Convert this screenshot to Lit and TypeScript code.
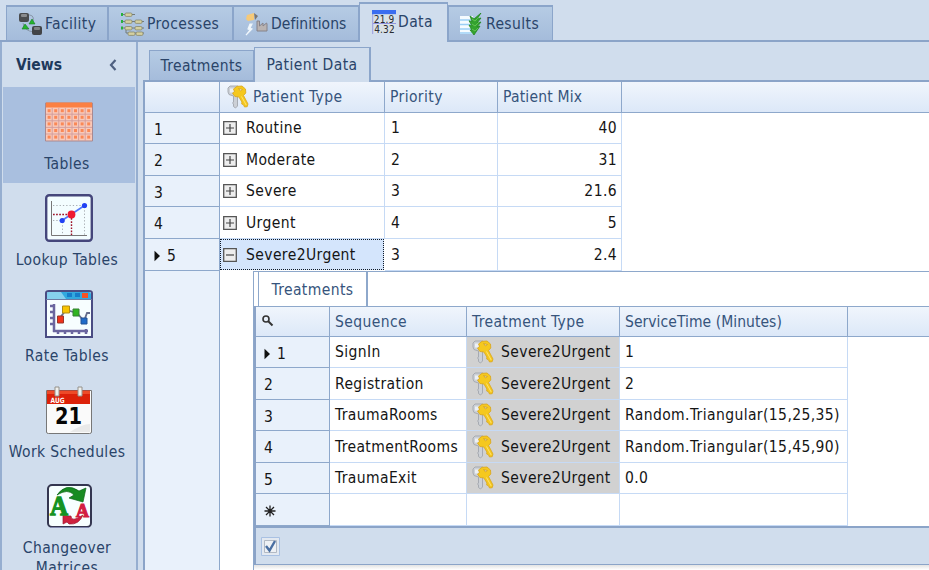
import { LitElement, html, svg, css, nothing } from "lit";
import { customElement, property } from "lit/decorators.js";
import { classMap } from "lit/directives/class-map.js";

const facilityIcon = html`<svg width="26" height="24" viewBox="0 0 26 24">
  <path d="M8 3Q17 2 15 9M5 11Q6 19 16 20" fill="none" stroke="#8796a8"/>
  <rect x="1" y="1" width="10" height="9" rx="2" fill="#4a4c4f"/><rect x="3" y="2" width="6" height="3" rx="1" fill="#898b8e"/>
  <rect x="14" y="14" width="10" height="9" rx="2" fill="#424447"/><rect x="16" y="15" width="6" height="3" rx="1" fill="#7d8083"/>
  <path d="M14 7l3 5h-6zM7 12l4 5H4z" fill="#25b52d" stroke="#177c27" stroke-width=".6"/></svg>`;

const node = (x: number, y: number) => svg`<rect x=${x} y=${y} width="7" height="3.4" rx="1.2" fill="#d4d0a0" stroke="#87876b" stroke-width=".8"/>`;
const processIcon = html`<svg width="25" height="25" viewBox="0 0 25 25">
  <path d="M0 2.500h14M0 9.500h23M0 16h23M5 17v4h18" stroke="#727b79" fill="none"/>
  ${node(4, 1)}${node(4, 8)}${node(14, 8)}${node(4, 14.5)}${node(14, 14.5)}${node(7, 20)}${node(15, 20)}
  <path d="M0 1h2v3H0zM0 8h2v3H0zM0 14.500h2v3H0z" fill="#27b23c"/></svg>`;

const definitionIcon = html`<svg width="24" height="24" viewBox="0 0 24 24">
  <path d="M2 3l7-2v7l-6 1-2-2z" fill="#f6c978"/><path d="M9 1l4 3-3 4z" fill="#7d7771"/>
  <path d="M5 12l-2 5 2 1-4 5 6-6-2-1 2-4z" fill="#f5faff" stroke="#eef5fb" stroke-width="1.200"/>
  <path d="M12 19V9h2.500v5l3.500-3v3l3.500-3 .5 1v7z" fill="#b9b3b2" stroke="#85828a"/></svg>`;

const dataIcon = html`<svg width="24" height="25" viewBox="0 0 24 25">
  <path d="M.7 4v20" stroke="#9c9de0"/><path d="M2 4h21v19H2z" fill="#dae1e6"/><path d="M0 0h24v4.200H0z" fill="#3b6df0"/>
  <path d="M1 13.500h23" stroke="#8f92dd"/>
  <g font-family="DejaVu Sans Condensed" font-size="10" letter-spacing="0" fill="#262b32"><text x="1.800" y="12.500" textLength="20.500">21.9</text><text x="2.200" y="23" textLength="20.500">4.32</text></g></svg>`;

const resultsIcon = html`<svg width="24" height="23" viewBox="0 0 24 23">
  <path d="M1 3h13v18H1z" fill="#f5fbff"/><path d="M1 7h12M1 11.500h12M1 16h12M1 20h12" stroke="#9acff6" stroke-width="1.600"/>
  <path d="M11 3l4 3 7-6-4 6 4-1-4 5 4-1-4 5 3-1-6 9-4-5 2 .5-3-5.500 3 .8-3-5 3 .8z" fill="#33a22f" stroke="#22861f" stroke-width=".8"/>
  <path d="M13 6l3 2 4-4M13 11l3 2 4-4M13 16l3 2 3-3" fill="none" stroke="#70cc5b" stroke-width=".8"/></svg>`;

const keys = html`<svg class="keys" width="22" height="24" viewBox="0 0 22 24">
  <path d="M1 3l2-2 8 0 1 2v7l-1.500 1v10L8.500 23 6.500 21.500V19l-1-1 1-1v-6L2 9.500 1 7z" fill="#ccd0d6" stroke="#a2a6ad" stroke-width=".9"/>
  <path d="M3 3.500h4v4H3z" fill="#edf0f4"/>
  <path fill-rule="evenodd" d="M6.500 4L10 1.300l5-.3 3.500 3 .3 4-2.300 2.500L21 19l-.8 2.700-2.700.3-1-2.200-1.800-.8.200-2-3-5-4-.5L5.500 8l2-1.500zM11.500 3.500l2 2.500 2-1.500z" fill="#f5c81e" stroke="#d9a51c" stroke-width=".8"/>
  <path d="M14.500 11.500l4.700 8.500" stroke="#ffe36f"/></svg>`;

const tableIcon = html`<svg width="48" height="48" viewBox="0 0 48 48">
  <path d="M.5 5h47v38H.5z" fill="#fac9b8" stroke="#a98991"/><path d="M1 4.500h46v5H1z" fill="#fb8043"/>
  ${[0, 1, 2, 3, 4].map(r => [0, 1, 2, 3, 4, 5, 6].map(c => svg`<rect x=${2.6 + c * 6.6} y=${11.2 + r * 6.6} width="3" height="3" fill="#fa8856"/>`))}
  <path d="M7.200 10v33M13.800 10v33M20.400 10v33M27 10v33M33.600 10v33M40.200 10v33M1 16.200h46M1 22.800h46M1 29.400h46M1 36h46" stroke="#d09c9c" stroke-width=".9" fill="none"/></svg>`;

const lookupIcon = html`<svg width="48" height="48" viewBox="0 0 48 48">
  <rect x="1.200" y="1.200" width="45.600" height="45.600" rx="3" fill="#f3fdff" stroke="#45467b" stroke-width="2.400"/>
  <path d="M6.500 7v34.500H42" fill="none" stroke="#777"/>
  <path d="M8 11.500h31M8 26.500h9M17.500 28v13M39.500 13v28" fill="none" stroke="#a7adb2" stroke-dasharray="1.300 2"/>
  <path d="M8 20.500h18M26.500 21v20" stroke="#9e1429" stroke-width="1.400" stroke-dasharray="1.700 1.400" fill="none"/>
  <path d="M17 26.500l22.500-15" stroke="#5277fa" stroke-width="1.600"/><circle cx="17.200" cy="26.500" r="2.600" fill="#2142f4"/><circle cx="39.500" cy="11.500" r="2.600" fill="#2142f4"/><circle cx="26.500" cy="20.500" r="3.900" fill="#ef1931"/></svg>`;

const rateIcon = html`<svg width="48" height="48" viewBox="0 0 48 48">
  <path d="M1 47V3q0-2 3-2h40q3 0 3 2v44z" fill="#f7feff" stroke="#4a4c83" stroke-width="2"/>
  <path d="M2 9V4q0-2 2-2h40q2 0 2 2v5z" fill="#32a9df"/><path d="M2 9V4q0-2 2-2h12l5 7z" fill="#86d0ee"/>
  <path d="M22 3h5v4h-5zM30 3h5v4h-5z" fill="#167cc9"/><path d="M37 3h6v5h-6z" fill="#f65124"/><path d="M1 9.500h46" stroke="#6d7aa3"/>
  <path d="M9 14v28M5 16h4M5 22h4M5 28h4M5 34h4M8 41h35M13 41v3M20 41v3M27 41v3M34 41v3M41 39v5" stroke="#6b669f" stroke-width="2.500" fill="none"/>
  <path d="M14 29l7-9 11 3 7 8 3-8h3" stroke="#656d8c" stroke-width="1.800" fill="none"/>
  <path d="M12.500 26h6v7h-6z" fill="#ef321a" stroke="#9b352b"/><path d="M17.500 16h7v7h-7z" fill="#f8c500" stroke="#b18b15"/><path d="M28 19h6v7h-6z" fill="#30b421" stroke="#348133"/><path d="M36 28h6v6h-6z" fill="#216cc9" stroke="#245394"/></svg>`;

const calendarIcon = html`<svg width="48" height="48" viewBox="0 0 48 48">
  <path d="M1.500 4.500h45V46q0 1.500-2 1.500h-41q-2 0-2-1.500z" fill="#fafafa" stroke="#777"/>
  <path d="M2 4.500h43V18H2z" fill="#dc2109"/><path d="M2 5h43v3H2z" fill="#ee4a28"/><path d="M25 46q12-8 20-8v8z" fill="#e9e9e9"/>
  <path d="M10 1h4v9h-4zM33 1h4v9h-4z" fill="#f0f0ed" stroke="#94918b"/>
  <g font-family="DejaVu Sans" font-weight="bold" letter-spacing="0"><text x="5.500" y="16.500" font-size="7.200" textLength="14" lengthAdjust="spacingAndGlyphs" fill="#fff">AUG</text><text x="10" y="37.500" font-size="22.500" textLength="27" lengthAdjust="spacingAndGlyphs" fill="#050505">21</text></g></svg>`;

const changeIcon = html`<svg width="48" height="48" viewBox="0 0 48 48">
  <rect x="3" y="3" width="43" height="42" rx="4" fill="#f7ffff" stroke="#343650" stroke-width="2"/><path d="M5 45.500h39" stroke="#8188ae"/>
  <path d="M12 13Q21 0 34 9l7-3-3 14-14-4 5-3q-6-7-17 0z" fill="#168b22" stroke="#0b6417" stroke-width=".7"/>
  <path d="M18 42V31l4 3h4q0 7 12-1-4 10-14 9l-2-2z" fill="#ce213e" stroke="#9e172f" stroke-width=".7"/>
  <g font-family="Liberation Serif" font-weight="bold" letter-spacing="0"><text x="5" y="33" font-size="28" textLength="18" lengthAdjust="spacingAndGlyphs" fill="#139322" stroke="#139322" stroke-width="1.400">A</text><text x="31" y="34.500" font-size="19" textLength="13" lengthAdjust="spacingAndGlyphs" fill="#d31d41" stroke="#d31d41" stroke-width="1.200">A</text></g></svg>`;

const arrow = html`<svg class="arrow" width="7" height="12" viewBox="0 0 7 12"><path d="M.5.800L6 6 .5 11.200z" fill="#111"/></svg>`;
const expander = (open: boolean) => html`<svg class="exp" width="14" height="14" viewBox="0 0 14 14">
  <path d="M.7.700h12.600v12.600H.7z" fill="#ededed" stroke="#555" stroke-width="1.300"/><path d=${open ? "M3 7h8" : "M3 7h8M7 3v8"} stroke="#444" stroke-width="1.200"/></svg>`;

@customElement("main-tabs")
class MainTabs extends LitElement {
  static styles = css`
    :host { display: flex; align-items: flex-end; height: 42px; box-sizing: border-box; padding: 0 0 0 6px; border-bottom: 2px solid #8ba4c8; }
    .tab { box-sizing: border-box; height: 35px; display: flex; align-items: center; border: 1px solid #8ba5ca; border-width: 2px 1px 0 1px; background: linear-gradient(#b5cbe4, #a5bcdb); padding-top: 1px; white-space: nowrap; }
    .active { height: 40px; margin-bottom: -2px; background: #d0dded; padding-bottom: 3px; }
    .t0 { width: 102px; padding-left: 11px; gap: 1px; }
    .t1 { width: 125px; padding-left: 12px; gap: 1px; }
    .t2 { width: 126px; padding-left: 11px; gap: 2px; letter-spacing: .05px; }
    .t3 { width: 89px; padding-left: 12px; gap: 2px; }
    .t4 { width: 105px; padding-left: 10px; gap: 3px; }
    svg { flex: none; }
  `;
  render() {
    const tabs = [["Facility", facilityIcon], ["Processes", processIcon], ["Definitions", definitionIcon], ["Data", dataIcon], ["Results", resultsIcon]];
    return tabs.map(([name, icon], i) => html`<div class="tab t${i} ${i === 3 ? "active" : ""}">${icon}<span>${name}</span></div>`);
  }
}

@customElement("views-panel")
class ViewsPanel extends LitElement {
  static styles = css`
    :host { display: block; box-sizing: border-box; width: 138px; height: 528px; overflow: hidden; border: 1px solid #96aed0; border-width: 0 2px 0 2px; flex: none; }
    .head { height: 45px; display: flex; align-items: center; justify-content: space-between; padding: 0 19px 0 14px; font-weight: bold; letter-spacing: 0; color: #1e395b; }
    .item { height: 96px; box-sizing: border-box; padding: 11px 4px 0 0; display: flex; flex-direction: column; align-items: center; gap: 8px; text-align: center; line-height: 20px; margin: 0 1px; }
    .item svg { flex: none; margin-left: 4px; }
    .selected { background: #a9bfdf; }
  `;
  render() {
    const items = [["Tables", tableIcon], ["Lookup Tables", lookupIcon], ["Rate Tables", rateIcon], ["Work Schedules", calendarIcon], ["Changeover Matrices", changeIcon]];
    return html`<div class="head"><span>Views</span><svg width="8" height="12" viewBox="0 0 8 12"><path d="M6.500 1L2 6l4.500 5" fill="none" stroke="#4f6080" stroke-width="2.200"/></svg></div>
      ${items.map(([name, icon], i) => html`<div class="item ${i ? "" : "selected"}">${icon}<span>${name}</span></div>`)}`;
  }
}

@customElement("treatment-grid")
class TreatmentGrid extends LitElement {
  static styles = css`
    :host { display: block; box-sizing: border-box; border-left: 1px solid #8ea8cb; border-top: 1px solid #8ea8cb; height: 299px; background: #fff; }
    .strip { height: 34px; display: flex; padding-left: 4px; }
    .tab { width: 110px; box-sizing: border-box; border: 1px solid #8ea8cb; border-width: 0 2px 0 1px; text-align: center; color: #36547c; line-height: 37px; }
    .body { border-left: 2px solid #8ba3c7; }
    .row { display: grid; grid-template-columns: 74px 137px 153px 228px 1fr; height: 31px; }
    .tall { height: 32px; }
    .row > div { box-sizing: border-box; border-right: 1px solid #c6daf5; border-bottom: 1px solid #c6daf5; padding-left: 5px; display: flex; align-items: center; white-space: nowrap; }
    .row > div:first-child { background: #e9f1fb; border-color: #8ea8cb; padding: 3px 0 0 8px; }
    .row > div:last-child { border: 0; }
    .header > div, .header > div:first-child { border-color: #8ea8cb; border-top: 1px solid #8ea8cb; background: linear-gradient(#f0f5fc, #dce8f8); color: #36547c; }
    .header > div:last-child { border-top: 1px solid #8ea8cb; border-bottom: 1px solid #8ea8cb; }
    .header > div:first-child { padding: 0 0 3px 5px; }
    .header > .time { letter-spacing: .05px; }
    .row > .key { background: #d1d1d1; padding-left: 5px; gap: 7px; }
    .keys { flex: none; }
    .arrow { margin-right: 6px; }
    .footer { box-sizing: border-box; height: 39px; background: #d0dded; border-top: 2px solid #8ba4c8; border-bottom: 1px solid #8ba4c8; display: flex; align-items: center; padding-left: 5px; }
    .shade { height: 6px; background: linear-gradient(#e3e3e3, #fff 80%); }
  `;
  render() {
    const rows = [["SignIn", "1"], ["Registration", "2"], ["TraumaRooms", "Random.Triangular(15,25,35)"], ["TreatmentRooms", "Random.Triangular(15,45,90)"], ["TraumaExit", "0.0"]];
    return html`<div class="strip"><div class="tab">Treatments</div></div><div class="body">
      <div class="row header"><div><svg width="13" height="13" viewBox="0 0 13 13"><circle cx="5" cy="5" r="3" fill="none" stroke="#333" stroke-width="1.600"/><path d="M7 7l4.500 4.500" stroke="#333" stroke-width="2"/></svg></div><div>Sequence</div><div>Treatment Type</div><div class="time">ServiceTime (Minutes)</div><div></div></div>
      ${rows.map(([name, time], i) => html`<div class=${classMap({ row: true, tall: i === 1 || i === 3 })}><div>${i === 0 ? arrow : nothing}${i + 1}</div><div>${name}</div><div class="key">${keys}<span>Severe2Urgent</span></div><div>${time}</div><div></div></div>`)}
      <div class="row tall"><div><svg width="12" height="12" viewBox="0 0 12 12"><path d="M6 .5v11M.5 6h11M2 2l8 8M10 2l-8 8" stroke="#222" stroke-width="1.300"/></svg></div><div></div><div></div><div></div><div></div></div>
      <div class="footer"><svg width="19" height="19" viewBox="0 0 19 19"><path d="M.5.500h18v18H.5z" fill="#e3e9f1" stroke="#a9c1e3"/><path d="M3.500 3.500h12v12h-12z" fill="#eef1f5" stroke="#b2b9c3"/><path d="M5 9l3.500 4.500 5.500-9.500" fill="none" stroke="#4a6fa2" stroke-width="2.400"/></svg></div></div><div class="shade"></div>`;
  }
}

@customElement("patient-grid")
class PatientGrid extends LitElement {
  static styles = css`
    :host { display: block; height: 490px; box-sizing: border-box; overflow: hidden; border-left: 2px solid #8ba4c8; border-top: 2px solid #8ba4c8; background: #fff; }
    .row { display: grid; grid-template-columns: 75px 165px 113px 124px 1fr; height: 31px; }
    .tall { height: 32px; }
    .row > div { box-sizing: border-box; border-right: 1px solid #c6daf5; border-bottom: 1px solid #c6daf5; display: flex; align-items: center; white-space: nowrap; padding-left: 6px; }
    .row > div:first-child { background: #e9f1fb; border-color: #8ea8cb; padding: 3px 0 0 9px; }
    .row > .name { padding-left: 3px; gap: 9px; }
    .row > .mix { justify-content: flex-end; padding-right: 4px; }
    .row > div:last-child { border: 0; }
    .header > div, .header > div:first-child { border-color: #8ea8cb; background: linear-gradient(#f0f5fc, #dce8f8); color: #36547c; padding-left: 5px; }
    .header > div:last-child { border-bottom: 1px solid #8ea8cb; }
    .header > .mixhead { letter-spacing: .2px; }
    .row > .type { padding-left: 7px; gap: 4px; }
    .row > .focus { background: #d4e5fc; border: 1px dotted #101a28; padding-left: 2px; margin: 0 1px 1px 0; }
    .arrow { margin-right: 6px; }
    .detail { display: grid; grid-template-columns: 75px 33px 1fr; }
    .gutter { background: #e9f1fb; border-right: 1px solid #8ea8cb; }
  `;
  render() {
    const rows = [["Routine", "1", "40"], ["Moderate", "2", "31"], ["Severe", "3", "21.6"], ["Urgent", "4", "5"], ["Severe2Urgent", "3", "2.4"]];
    return html`<div class="row header"><div></div><div class="type">${keys}<span>Patient Type</span></div><div>Priority</div><div class="mixhead">Patient Mix</div><div></div></div>
      ${rows.map(([name, priority, mix], i) => html`<div class=${classMap({ row: true, tall: i === 1 || i === 3 || i === 4 })}><div>${i === 4 ? arrow : nothing}${i + 1}</div><div class="name ${i === 4 ? "focus" : ""}">${expander(i === 4)}<span>${name}</span></div><div>${priority}</div><div class="mix">${mix}</div><div></div></div>`)}
      <div class="detail"><div class="gutter"></div><div></div><treatment-grid></treatment-grid></div>`;
  }
}

@customElement("app-root")
class AppRoot extends LitElement {
  @property() selected = "Patient Data";
  static styles = css`
    :host { display: block; width: 929px; height: 570px; overflow: hidden; background: #d0dded; font: 15.500px "DejaVu Sans Condensed", "DejaVu Sans", sans-serif; letter-spacing: .4px; color: #151515; }
    main-tabs, views-panel { color: #2a4469; }
    .page { display: flex; height: 528px; }
    .content { flex: 1; min-width: 0; padding-left: 5px; }
    .tabs { height: 38px; display: flex; align-items: flex-end; padding-left: 6px; color: #2a4469; }
    .tab { box-sizing: border-box; width: 105px; height: 30px; border: 1px solid #8ba5ca; border-bottom: 0; background: linear-gradient(#b5cbe4, #a5bcdb); line-height: 31px; text-align: center; }
    .active { position: relative; width: 117px; height: 35px; margin-bottom: -2px; background: #d0dded; border-right-width: 2px; line-height: 35px; }
  `;
  render() {
    return html`<main-tabs></main-tabs><div class="page"><views-panel></views-panel><div class="content">
      <div class="tabs">${["Treatments", "Patient Data"].map(t => html`<div class=${classMap({ tab: true, active: t === this.selected })}>${t}</div>`)}</div>
      <patient-grid></patient-grid></div></div>`;
  }
}
